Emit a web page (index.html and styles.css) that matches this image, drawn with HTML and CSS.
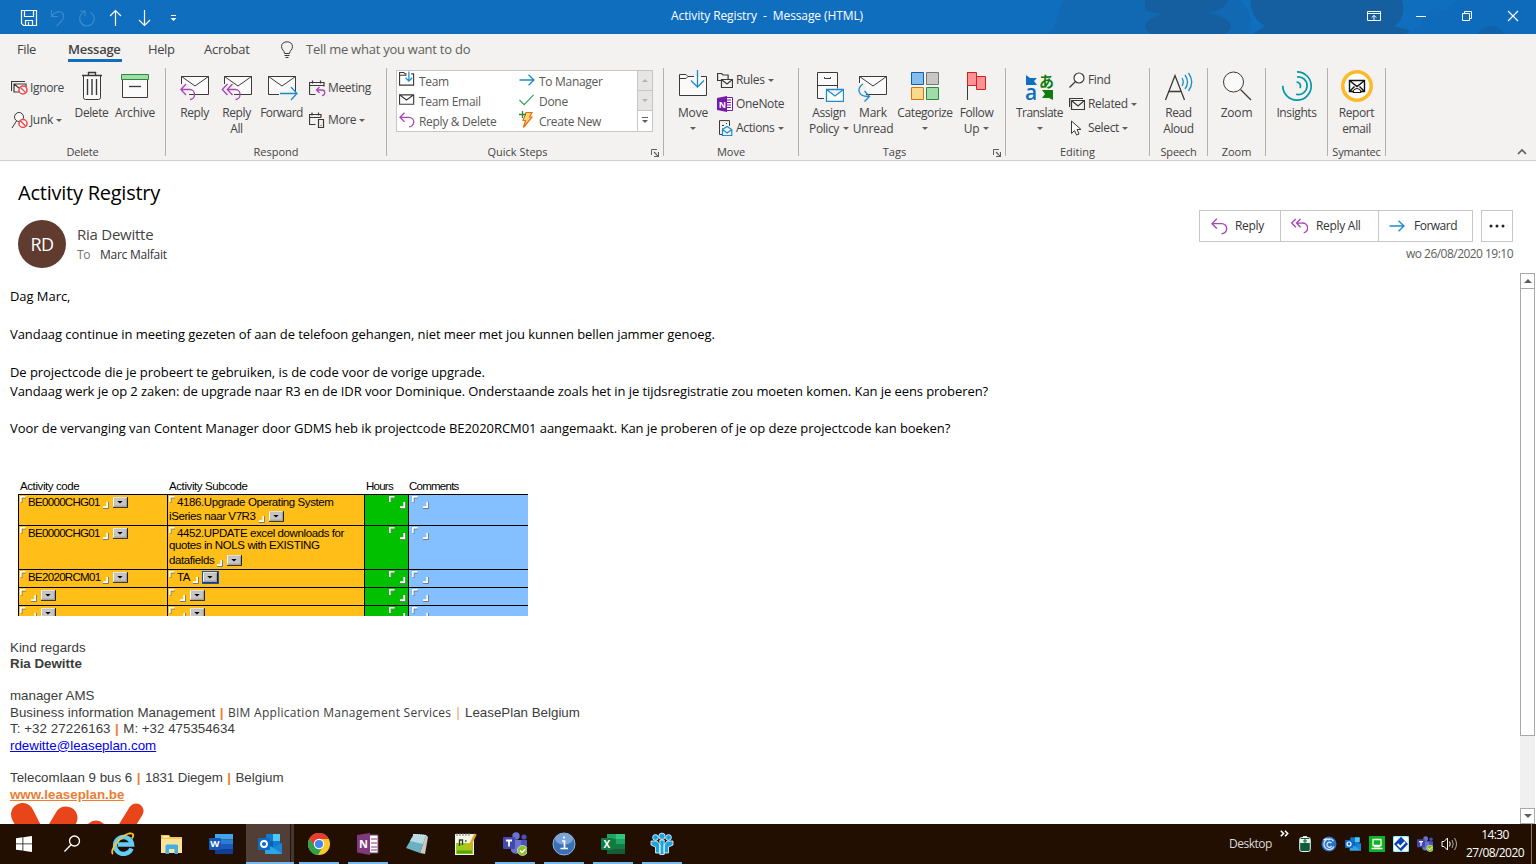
FILE: index.html
```html
<!DOCTYPE html>
<html lang="en">
<head>
<meta charset="utf-8">
<title>Activity Registry - Message (HTML)</title>
<link rel="stylesheet" href="styles.css">
</head>
<body>
<svg class="defs" width="0" height="0">
  <defs>
    <symbol id="reply" viewBox="0 0 16 16"><path d="M5.500 .8L1 5.300l4.500 4.500M1 5.300h9a4.500 4.500 0 0 1 0 9.500" fill="none" stroke="#a846b5" stroke-width="1.300"/></symbol>
    <symbol id="replyall" viewBox="0 0 16 16"><path d="M4.500 1L.7 4.800l3.800 3.800M9 1L5.200 4.800 9 8.600M5.200 4.800H10a4.700 4.700 0 0 1 2 9.200" fill="none" stroke="#a846b5" stroke-width="1.300"/></symbol>
    <symbol id="fwd" viewBox="0 0 16 16"><path d="M.5 8h14M9.500 2.700L15 8l-5.500 5.300" fill="none" stroke="#1e8bcd" stroke-width="1.300"/></symbol>
    <symbol id="no" viewBox="0 0 10 10"><circle cx="5" cy="5" r="4" fill="#fff" stroke="#ee4848" stroke-width="1.500"/><path d="M2.200 2.200l5.600 5.600" stroke="#ee4848" stroke-width="1.400"/></symbol>
    <symbol id="bigmail" viewBox="0 0 30 30"><path d="M1.500 4.500h27v18h-27z" fill="#fafafa" stroke="#3b3a39"/><path d="M1.500 4.500L15 14 28.500 4.500" fill="none" stroke="#3b3a39"/></symbol>
    <symbol id="drop" viewBox="0 0 14 10"><path d="M0 0h14v10H0z" fill="#222"/><path d="M0 0h13v9H0z" fill="#fff"/><path d="M1 1h12v8H1z" fill="#999"/><path d="M1 1h11v7H1z" fill="#c6c6c6"/><path d="M4 3.500h5L6.500 6z" fill="#000"/></symbol>
    <symbol id="open" viewBox="0 0 6 7"><path d="M2 7V2H6" fill="none" stroke="#777"/><path d="M.8 6V.8H5.500" fill="none" stroke="#fff" stroke-width="1.600"/></symbol>
    <symbol id="close" viewBox="0 0 6 7"><path d="M5.500 0v6.500H0" fill="none" stroke="#777"/><path d="M4.200 0v5.200H0" fill="none" stroke="#fff" stroke-width="1.700"/></symbol>
    <symbol id="launch" viewBox="0 0 8 8"><path d="M.5 6V.5H6" fill="none" stroke="#605e5c"/><path d="M3 3l4 4M7.500 3v4.500H3" fill="none" stroke="#605e5c" stroke-width="1.200"/></symbol>
    <symbol id="outlook" viewBox="0 0 24 24"><path d="M8 2h14v14H8z" fill="#1279d0"/><path d="M15 2h7v7h-7z" fill="#50c7f4"/><path d="M8 9h7v7H8z" fill="#0a63b2"/><path d="M7 22h17V11l-8 5-9-4z" fill="#2fa4e7"/><path d="M24 11v11L15 15.500z" fill="#1a87d6"/><rect x="0" y="6" width="12" height="12" rx="1" fill="#0f6cc4"/><circle cx="6" cy="12" r="3" fill="none" stroke="#fff" stroke-width="1.800"/></symbol>
    <symbol id="teams" viewBox="0 0 24 24"><circle cx="13" cy="4" r="3.700" fill="#6b73d6"/><circle cx="21" cy="5" r="2.600" fill="#4750b8"/><path d="M8 8h11v8a6 6 0 0 1-11 3z" fill="#6a72d4"/><path d="M18 8h6v7a4 4 0 0 1-6 4z" fill="#4a53bc"/><rect x="0" y="5" width="12" height="12" rx="1" fill="#4249ad"/><path d="M3 8.500h6M6 8.500v6" stroke="#fff" stroke-width="1.800"/><circle cx="19.500" cy="18.500" r="5" fill="#8cc028" stroke="#e8f5cf" stroke-width=".7"/><path d="M17 18.500l2 2 3.300-3.500" fill="none" stroke="#fff" stroke-width="1.500"/></symbol>
  </defs>
</svg>

<div class="window">
  <header class="titlebar">
    <svg class="cloud" width="620" height="34" viewBox="0 0 620 34"><path d="M132 34C146 22 138 14 148 0h176c18 16 8 34 8 34z" fill="#155fa0" opacity=".35"/><g fill="#155fa0"><path d="M229 0h84q-8 14-30 13-30 6-54-3z"/><ellipse cx="272" cy="26" rx="43" ry="15"/><path d="M335 0h151q5 18-8 26l16 4-4 4H337l12-8q-16-10-14-26z"/><path d="M561 34q15-16 28 0z"/></g><path d="M505 24q8-22 24-13 5-12 25-11h66v34H490z" fill="#0b66b8" opacity=".5"/></svg>
    <div class="qat">
      <svg width="18" height="18" viewBox="0 0 18 18" fill="none" stroke="#fff"><path d="M1.500 1.500h15v15h-13l-2-2zM4.500 1.500v6h9v-6M5.500 16.500v-5h7v5M8.500 13v3.500" stroke-width="1.200"/></svg>
      <svg width="18" height="18" viewBox="0 0 18 18" fill="none" stroke="#3c8ad0"><path d="M2.500 1v6.500H9M2.500 7.500C6 2 13 1 14.500 6s-4 8-7 11" stroke-width="1.200"/></svg>
      <svg width="18" height="18" viewBox="0 0 18 18" fill="none" stroke="#3c8ad0"><path d="M2 2h5v5M6.500 2.700a7.300 7.300 0 1 0 6 .5" stroke-width="1.200"/></svg>
      <svg width="18" height="18" viewBox="0 0 18 18" fill="none" stroke="#fff"><path d="M8.500 17V1.500M3 7l5.500-5.500L14 7" stroke-width="1.200"/></svg>
      <svg width="18" height="18" viewBox="0 0 18 18" fill="none" stroke="#fff"><path d="M8.500 1v15.500M3 11l5.500 5.500L14 11" stroke-width="1.200"/></svg>
      <svg width="18" height="18" viewBox="0 0 18 18"><path d="M6 6.500h5" stroke="#fff"/><path d="M5.500 9h6l-3 3z" fill="#fff"/></svg>
    </div>
    <div class="caption">Activity Registry &nbsp;-&nbsp; Message (HTML)</div>
    <div class="winbtns">
      <svg width="14" height="12" viewBox="0 0 14 12" fill="none" stroke="#fff"><path d="M.5 1.500h13v9H.5zM.5 3.500h13M7 10V5.500M4.800 7.500L7 5.300l2.200 2.200"/></svg>
      <svg width="12" height="12" viewBox="0 0 12 12" stroke="#fff"><path d="M1 6.500h10"/></svg>
      <svg width="12" height="12" viewBox="0 0 12 12" fill="none" stroke="#fff"><path d="M1.500 3.500h7v7h-7zM3.500 3V1.500h7v7H9"/></svg>
      <svg width="12" height="12" viewBox="0 0 12 12" stroke="#fff" stroke-width="1.200"><path d="M1 1l10 10M11 1L1 11"/></svg>
    </div>
  </header>

  <nav class="tabs">
    <span class="t-file">File</span><span class="t-msg">Message</span><span class="t-help">Help</span><span class="t-acro">Acrobat</span>
    <svg width="12" height="18" viewBox="0 0 12 18" fill="none" stroke="#3b3a39"><path d="M3.500 12.500c0-3-3-3.500-3-7C.5 2.500 3 .8 6 .8s5.500 1.700 5.500 4.700c0 3.500-3 4-3 7zM3.500 14.500h5M4.500 16.500h3"/></svg>
    <span class="t-tell">Tell me what you want to do</span>
  </nav>

  <section class="ribbon">
    <div class="group g-delete">
      <div class="tools">
        <div class="smalls two w-ign">
          <div class="small"><svg width="17" height="16" viewBox="0 0 17 16"><path d="M.5 11V1.500H14M3 4h12v8H3z M3 4l5 4" fill="none" stroke="#3b3a39" stroke-width="1.200"/><use href="#no" x="7" y="5" width="10" height="10"/></svg><span class="xs">Ignore</span></div>
          <div class="small"><svg width="17" height="17" viewBox="0 0 17 17"><circle cx="8" cy="5" r="4.500" fill="#fafafa" stroke="#3b3a39"/><path d="M5.500 9L1 16" stroke="#3b3a39"/><use href="#no" x="7" y="6.500" width="10" height="10"/></svg><span class="xs">Junk</span><i class="dd"></i></div>
        </div>
        <div class="big w41"><svg width="30" height="32" viewBox="0 0 30 32" fill="none" stroke="#3b3a39"><path d="M6.500 5.500h17v22q0 2-2 2h-13q-2 0-2-2z" fill="#fafafa"/><path d="M5 5.500h20M11.500 5V2.500h7V5M10.500 9v16M15 9v16M19.500 9v16" stroke-width="1.400"/></svg><span>Delete</span></div>
        <div class="big w46"><svg width="30" height="32" viewBox="0 0 30 32"><path d="M2.500 8v19.500h25V8" fill="#fafafa" stroke="#3b3a39"/><path d="M1.500 4.500h27v5h-27z" fill="#a0dba8" stroke="#2a8a40"/><path d="M9 16.500h12" stroke="#3b3a39" stroke-width="1.300"/></svg><span class="w">Archive</span></div>
      </div>
      <div class="label">Delete</div>
    </div>

    <div class="group g-respond">
      <div class="tools p8">
        <div class="big w41"><svg width="30" height="32" viewBox="0 0 30 32"><use href="#bigmail" y="2" width="30" height="30"/><path d="M0 14h9v14H0z" fill="#f3f2f1"/><path d="M6 14L.8 19.500 6 25M1 19.500h9a4.500 5 0 0 1 0 10" fill="none" stroke="#a846b5" stroke-width="1.300"/></svg><span>Reply</span></div>
        <div class="big w43"><svg width="32" height="32" viewBox="-2 0 32 32"><use href="#bigmail" y="2" width="30" height="30"/><path d="M0 14h11v12H0z" fill="#f3f2f1"/><path d="M4.500 14L-.7 19.500 4.500 25M9.500 14l-5.200 5.500L9.500 25M4.500 19.500h8a4.500 5 0 0 1 0 10" fill="none" stroke="#a846b5" stroke-width="1.300"/></svg><span>Reply<br>All</span></div>
        <div class="big w47"><svg width="32" height="32" viewBox="0 0 32 32"><use href="#bigmail" x="1" y="2" width="30" height="30"/><path d="M13 21h19v7H13z" fill="#f3f2f1"/><path d="M14 23.500h16M25 17l6 6.500-6 6.500" fill="none" stroke="#1e8bcd" stroke-width="1.300"/></svg><span class="n">Forward</span></div>
        <div class="smalls two ml4">
          <div class="small"><svg width="17" height="17" viewBox="0 0 17 17" fill="none"><path d="M.500 14.500V2.500h14.500v4M.5 5.500H15M3.500.5v3M11.500.5v3M.5 14.500h6" stroke="#3b3a39" stroke-width="1.200"/><path d="M10.500 7L7.500 10l3 3M7.500 10H13a2.500 2.500 0 0 1 0 5.500" stroke="#a846b5" stroke-width="1.300"/></svg><span class="xs">Meeting</span></div>
          <div class="small"><svg width="17" height="17" viewBox="0 0 17 17" fill="none" stroke="#3b3a39" stroke-width="1.200"><path d="M6.500 12.500h-6v-10H12v3M.5 5.500H12M3 .5v3M9.500.5v3M9.500 7.500h5v8h-5zM11.500 13.500h1"/></svg><span class="xs">More</span><i class="dd"></i></div>
        </div>
      </div>
      <div class="label wide">Respond</div>
    </div>

    <div class="group g-quick">
      <div class="tools">
        <div class="gallery">
          <div class="steps">
            <div><svg width="17" height="17" viewBox="0 0 17 17" fill="none"><path d="M8 2.500H6.500L5 1H.6v13.500H15.500v-12H13M.5 4H8" stroke="#3b3a39" stroke-width="1.200"/><path d="M10.500 0v10M7 6.700l3.500 3.500L14 6.700" stroke="#1e8bcd" stroke-width="1.300"/></svg>Team</div>
            <div><svg width="16" height="16"><use href="#fwd"/></svg>To Manager</div>
            <div><svg width="17" height="16" viewBox="0 0 17 16" fill="none" stroke="#3b3a39" stroke-width="1.200"><path d="M.6 2.500h15v10h-15zM.6 2.500L8 8l7.600-5.500"/></svg>Team Email</div>
            <div><svg width="17" height="16" viewBox="0 0 17 16"><path d="M.5 8l5 5L15.500 2.500" fill="none" stroke="#36a35a" stroke-width="1.300"/></svg>Done</div>
            <div><svg width="16" height="16"><use href="#reply"/></svg>Reply &amp; Delete</div>
            <div><svg width="16" height="18" viewBox="0 0 16 18"><path d="M7 1.500h6L10.500 6H13L4.500 16.500l2-7H4z" fill="#ffd584" stroke="#e8710a" stroke-width="1.200"/><path d="M3.500 0v7M0 3.500h7" stroke="#2a8a40" stroke-width="1.300"/></svg>Create New</div>
          </div>
          <div class="gscroll"><b><i class="up"></i></b><b><i class="dn"></i></b><b class="on"><i class="dn bar"></i></b></div>
        </div>
      </div>
      <div class="label wide launcher"><span>Quick Steps</span><svg width="8" height="8"><use href="#launch"/></svg></div>
    </div>

    <div class="group g-move">
      <div class="tools p8">
        <div class="big w42"><svg width="30" height="32" viewBox="0 0 30 32" fill="none"><path d="M1.500 4.500H8l2 2h18.500v19h-27z" fill="#fafafa"/><path d="M16 6.500h-6l-2-2H1.500v21h27v-19H23M1.500 8.500H8l2-2" stroke="#3b3a39"/><path d="M19.500 0v17M13 10.500l6.500 6.500 6.500-6.500" stroke="#1e8bcd" stroke-width="1.300"/></svg><span class="w">Move</span><i class="dd"></i></div>
        <div class="smalls ml3">
          <div class="small"><svg width="16" height="17" viewBox="0 0 16 17" fill="none" stroke="#3b3a39" stroke-width="1.200"><path d="M4.500 8.500H.6v-7h4l1.500 1.500h5v4M4.500 7.500h11v8h-11zM4.500 7.500L10 12l5.500-4.500"/></svg><span class="xs">Rules</span><i class="dd"></i></div>
          <div class="small"><svg width="16" height="16" viewBox="0 0 16 16"><path d="M9 1.500h6.500v13H9z" fill="#fff" stroke="#7719aa"/><path d="M10 4h4M10 6.500h4M10 9h4M10 11.500h4" stroke="#7719aa"/><path d="M0 2l10-2v16L0 14z" fill="#7719aa"/><text x="1.800" y="11.500" class="ic" font-size="9">N</text></svg><span class="xs">OneNote</span></div>
          <div class="small"><svg width="16" height="17" viewBox="0 0 16 17" fill="none"><path d="M6 14.500H2.500V.6h10V6M5 5.500h2M9 3.500h1M5 9h1" stroke="#3b3a39"/><path d="M5.500 9.500L10 6.500l4.800 3v6H5.500zM5.500 9.500L10 13l4.800-3.500" stroke="#1e8bcd" stroke-width="1.200"/></svg><span class="xs">Actions</span><i class="dd"></i></div>
        </div>
      </div>
      <div class="label wide">Move</div>
    </div>

    <div class="group g-tags">
      <div class="tools p8">
        <div class="big w44"><svg width="30" height="32" viewBox="0 0 30 32" fill="none"><path d="M10 28.500H3.500v-26h20v16M3.500 15.500h20" fill="#fafafa" stroke="#3b3a39"/><path d="M10.500 7v1.500h6V7" stroke="#3b3a39"/><path d="M12.500 19.500h17v12h-17zM12.500 19.500L21 26l8.500-6.500" fill="#fff" stroke="#1e8bcd" stroke-width="1.300"/></svg><span>Assign<br>Policy<i class="dd"></i></span></div>
        <div class="big w44"><svg width="30" height="32" viewBox="0 0 30 32" fill="none"><use href="#bigmail" y="2" width="30" height="30"/><path d="M0 13h8v12h7v4H0z" fill="#f3f2f1"/><path d="M5 14C-1 18-1 27 11 26.500M6.500 21l5 5.500-5 5" stroke="#1e8bcd" stroke-width="1.300"/></svg><span class="w">Mark<br>Unread</span></div>
        <div class="big w60"><svg width="30" height="32" viewBox="0 0 30 32"><path d="M1.500 2.500h12v12h-12z" fill="#83beec" stroke="#0f5fae"/><path d="M16.500 2.500h12v12h-12z" fill="#c8c6c4" stroke="#777"/><path d="M1.500 17.500h12v12h-12z" fill="#fada8c" stroke="#d9730b"/><path d="M16.500 17.500h12v12h-12z" fill="#a0dba8" stroke="#2a8a40"/></svg><span>Categorize</span><i class="dd"></i></div>
        <div class="big w43"><svg width="30" height="32" viewBox="0 0 30 32"><path d="M5.500 2v28" stroke="#3b3a39"/><path d="M5.500 2.500h9v4h9v13h-9v-4h-9z" fill="#ff9198" stroke="#d42314"/><path d="M14.500 6v10" stroke="#d42314"/></svg><span>Follow<br>Up<i class="dd"></i></span></div>
      </div>
      <div class="label wide launcher"><span>Tags</span><svg width="8" height="8"><use href="#launch"/></svg></div>
    </div>

    <div class="group g-edit">
      <div class="tools p8">
        <div class="big w51"><svg class="vis" width="30" height="32" viewBox="0 0 30 32"><text x="14" y="16.500" class="jp" font-size="15">あ</text><text x="0" y="29.500" class="la" font-size="21">a</text><path d="M1 5l4 3h7l-3 3 3 4H1z" fill="#106ebe"/><path d="M28 30v-10H17l3 4-3 4h7z" fill="#107c10"/></svg><span class="n">Translate</span><i class="dd"></i></div>
        <div class="smalls ml4">
          <div class="small"><svg width="16" height="17" viewBox="0 0 16 17"><circle cx="10" cy="6" r="5" fill="#fafafa" stroke="#3b3a39" stroke-width="1.200"/><path d="M6.500 9.500L.5 15.500" stroke="#3b3a39" stroke-width="1.300"/></svg><span class="xs">Find</span></div>
          <div class="small"><svg width="16" height="16" viewBox="0 0 16 16" fill="none" stroke="#3b3a39" stroke-width="1.200"><path d="M.6 11V2.500H14M2.500 4.500h13v9h-13zM2.500 4.500L9 10l6.500-5.500"/></svg><span class="xs">Related</span><i class="dd"></i></div>
          <div class="small"><svg width="16" height="16" viewBox="0 0 16 16"><path d="M2.500 1v12.500l3-3 2 4.500 2.500-1-2-4.500h4z" fill="#fff" stroke="#3b3a39"/></svg><span class="xs">Select</span><i class="dd"></i></div>
        </div>
      </div>
      <div class="label wide">Editing</div>
    </div>

    <div class="group g58">
      <div class="tools"><div class="big full"><svg width="30" height="32" viewBox="0 0 30 32" fill="none"><path d="M1.500 30L11 5.500 20.500 30M5 21.500h12" stroke="#3b3a39" stroke-width="1.300"/><path d="M18 8q2.500 4 0 8M21 5q5 7 0 14M24.500 3q6.500 9 0 18" stroke="#1e8bcd" stroke-width="1.300"/></svg><span>Read<br>Aloud</span></div></div>
      <div class="label">Speech</div>
    </div>
    <div class="group g58">
      <div class="tools"><div class="big full"><svg width="30" height="32" viewBox="0 0 30 32"><circle cx="11.500" cy="12" r="10" fill="#fafafa" stroke="#3b3a39"/><path d="M18.500 19.500L29 30" stroke="#3b3a39" stroke-width="1.300"/></svg><span class="w">Zoom</span></div></div>
      <div class="label wide">Zoom</div>
    </div>
    <div class="group g62">
      <div class="tools"><div class="big full"><svg width="32" height="32" viewBox="0 0 32 32" fill="none" stroke="#0097a7" stroke-width="1.700"><path d="M16 1.800a14.200 14.200 0 1 1-14.200 14M16 7a8.800 8.800 0 1 1-1 17.200M15.500 12a4 4 0 0 1 3.500 6"/></svg><span>Insights</span></div></div>
      <div class="label"></div>
    </div>
    <div class="group g58">
      <div class="tools"><div class="big full"><svg width="32" height="32" viewBox="0 0 32 32" fill="none"><circle cx="16" cy="16" r="14.200" fill="#fff" stroke="#fdb927" stroke-width="3.600"/><path d="M8.500 10.500h15v11h-15zM8.500 10.500l7.500 6 7.500-6M8.500 21.500l5-5M23.500 21.500l-5-5" stroke="#111" stroke-width="1.400"/><path d="M12 22.500q0-4 4-4t4 4z" fill="#fff" stroke="#111"/></svg><span>Report<br>email</span></div></div>
      <div class="label">Symantec</div>
    </div>
    <svg class="collapse" width="10" height="7" viewBox="0 0 10 7"><path d="M1 6l4-4 4 4" fill="none" stroke="#605e5c" stroke-width="1.700"/></svg>
  </section>

  <section class="msghead">
    <h1>Activity Registry</h1>
    <div class="who">
      <div class="avatar">RD</div>
      <div class="names">
        <div class="from">Ria Dewitte</div>
        <div class="to"><span class="grey">To</span><span>Marc Malfait</span></div>
      </div>
      <div class="actions">
        <div class="btns">
          <div class="split">
            <button class="b1"><svg width="17" height="17"><use href="#reply"/></svg>Reply</button>
            <button class="b2"><svg width="17" height="17"><use href="#replyall"/></svg>Reply All</button>
            <button class="b3"><svg width="16" height="16"><use href="#fwd"/></svg>Forward</button>
          </div>
          <button class="more"><svg width="16" height="4" viewBox="0 0 16 4" fill="#222"><circle cx="2" cy="2" r="1.500"/><circle cx="8" cy="2" r="1.500"/><circle cx="14" cy="2" r="1.500"/></svg></button>
        </div>
        <div class="date">wo 26/08/2020 19:10</div>
      </div>
    </div>
  </section>

  <main class="reading">
    <article class="mail">
      <p>Dag Marc,</p>
      <p>Vandaag continue in meeting gezeten of aan de telefoon gehangen, niet meer met jou kunnen bellen jammer genoeg.</p>
      <p>De projectcode die je probeert te gebruiken, is de code voor de vorige upgrade.<br><span class="l4">Vandaag werk je op 2 zaken: de upgrade naar R3 en de IDR voor Dominique. Onderstaande zoals het in je tijdsregistratie zou moeten komen. Kan je eens proberen?</span></p>
      <p>Voor de vervanging van Content Manager door GDMS heb ik projectcode BE2020RCM01 aangemaakt. Kan je proberen of je op deze projectcode kan boeken?</p>

      <div class="sheet">
        <div class="row head"><span>Activity code</span><span>Activity Subcode</span><span class="tight">Hours</span><span class="tight">Comments</span></div>
        <div class="row r31">
          <div class="o"><div class="ln"><svg class="op"><use href="#open"/></svg><span class="code">BE0000CHG01</span><svg class="cl"><use href="#close"/></svg><svg class="dp"><use href="#drop"/></svg></div></div>
          <div class="o"><div class="ln"><svg class="op"><use href="#open"/></svg>4186.Upgrade Operating System</div><div class="ln">iSeries naar V7R3<svg class="cl"><use href="#close"/></svg><svg class="dp"><use href="#drop"/></svg></div></div>
          <div class="g"><svg class="op"><use href="#open"/></svg><svg class="cl"><use href="#close"/></svg></div>
          <div class="b"><svg class="op"><use href="#open"/></svg><svg class="cl"><use href="#close"/></svg></div>
        </div>
        <div class="row r44">
          <div class="o"><div class="ln"><svg class="op"><use href="#open"/></svg><span class="code">BE0000CHG01</span><svg class="cl"><use href="#close"/></svg><svg class="dp"><use href="#drop"/></svg></div></div>
          <div class="o"><div class="ln l12"><svg class="op"><use href="#open"/></svg>4452.UPDATE excel downloads for</div><div class="ln l12">quotes in NOLS with EXISTING</div><div class="ln l16">datafields<svg class="cl"><use href="#close"/></svg><svg class="dp"><use href="#drop"/></svg></div></div>
          <div class="g"><svg class="op"><use href="#open"/></svg><svg class="cl"><use href="#close"/></svg></div>
          <div class="b"><svg class="op"><use href="#open"/></svg><svg class="cl"><use href="#close"/></svg></div>
        </div>
        <div class="row r18">
          <div class="o"><div class="ln"><svg class="op"><use href="#open"/></svg><span class="code">BE2020RCM01</span><svg class="cl"><use href="#close"/></svg><svg class="dp"><use href="#drop"/></svg></div></div>
          <div class="o"><div class="ln"><svg class="op"><use href="#open"/></svg>TA<svg class="cl"><use href="#close"/></svg><svg class="dp focus"><use href="#drop"/></svg></div></div>
          <div class="g"><svg class="op"><use href="#open"/></svg><svg class="cl"><use href="#close"/></svg></div>
          <div class="b"><svg class="op"><use href="#open"/></svg><svg class="cl"><use href="#close"/></svg></div>
        </div>
        <div class="row r18">
          <div class="o"><div class="ln"><svg class="op"><use href="#open"/></svg><svg class="cl"><use href="#close"/></svg><svg class="dp"><use href="#drop"/></svg></div></div>
          <div class="o"><div class="ln"><svg class="op"><use href="#open"/></svg><svg class="cl"><use href="#close"/></svg><svg class="dp"><use href="#drop"/></svg></div></div>
          <div class="g"><svg class="op"><use href="#open"/></svg><svg class="cl"><use href="#close"/></svg></div>
          <div class="b"><svg class="op"><use href="#open"/></svg><svg class="cl"><use href="#close"/></svg></div>
        </div>
        <div class="row r11">
          <div class="o"><div class="ln"><svg class="op"><use href="#open"/></svg><svg class="cl"><use href="#close"/></svg><svg class="dp"><use href="#drop"/></svg></div></div>
          <div class="o"><div class="ln"><svg class="op"><use href="#open"/></svg><svg class="cl"><use href="#close"/></svg><svg class="dp"><use href="#drop"/></svg></div></div>
          <div class="g"><svg class="op"><use href="#open"/></svg><svg class="cl"><use href="#close"/></svg></div>
          <div class="b"><svg class="op"><use href="#open"/></svg><svg class="cl"><use href="#close"/></svg></div>
        </div>
      </div>

      <div class="sig">
        <div>Kind regards</div>
        <div><b>Ria Dewitte</b></div>
        <div class="gap">manager AMS</div>
        <div class="l17">Business information Management <i>|</i> <span class="bim">BIM Application Management Services <i>|</i></span> LeasePlan Belgium</div>
        <div><span class="tel">T: +32 27226163</span> <i>|</i> M: +32 475354634</div>
        <div><a class="m">rdewitte@leaseplan.com</a></div>
        <div class="gap">Telecomlaan 9 bus 6 <i>|</i> <span class="zip">1831 Diegem</span> <i>|</i> Belgium</div>
        <div class="l17"><a class="w">www.leaseplan.be</a></div>
        <svg class="logo" width="140" height="24" viewBox="0 0 140 24" fill="none" stroke="#e8451a" stroke-linecap="round"><path d="M12.500 11.500L26 38M56 15L40 42" stroke-width="23"/><path d="M86 28v10" stroke-width="21"/><path d="M126 8L110 34" stroke-width="15"/></svg>
      </div>
    </article>
    <aside class="scroll"><b><i class="up"></i></b><div class="track"><div class="thumb"></div></div><b><i class="dn"></i></b></aside>
  </main>

  <footer class="taskbar">
    <div class="apps">
      <span class="start"><svg width="16" height="16" viewBox="0 0 16 16" fill="#fff"><path d="M0 2.200l6.500-.9v6.200H0zM7.300 1.200L16 0v7.500H7.300zM0 8.300h6.500v6.300L0 13.700zM7.300 8.300H16V16l-8.700-1.200z"/></svg></span>
      <span class="start"><svg width="18" height="18" viewBox="0 0 18 18" fill="none" stroke="#fff" stroke-width="1.300"><circle cx="11.500" cy="6" r="5"/><path d="M8 9.700L1.500 16.500"/></svg></span>
      <span class="app"><svg width="24" height="24" viewBox="0 0 24 24" fill="none"><path d="M20.500 16.500A8.500 8.500 0 1 1 21 12.500H7" stroke="#62cdf7" stroke-width="4.400"/><path d="M2 22C-2 19 9 4 18 1.500c5-1 5 2 3 5" stroke="#f9c623" stroke-width="1.800"/></svg></span>
      <span class="app"><svg width="24" height="24" viewBox="0 0 24 24"><path d="M1 3h8l1.500 2H22v16H1z" fill="#f5c75a"/><path d="M3 4h6v1.500H3z" fill="#fff3c4"/><path d="M1 7h21v14H1z" fill="#fde398"/><path d="M5.500 22v-8q0-1.500 1.500-1.500h9.500q1.500 0 1.500 1.500v8h-3.500v-5h-5.500v5z" fill="#41b0e8"/></svg></span>
      <span class="app"><svg width="24" height="24" viewBox="0 0 24 24"><path d="M6 2h18v5.500H6z" fill="#41a5ee"/><path d="M6 7.500h18V12H6z" fill="#2b7cd3"/><path d="M6 12h18v5H6z" fill="#185abd"/><path d="M6 17h18v5H6z" fill="#103f91"/><rect y="6" width="12" height="12" rx="1" fill="#1757b5"/><text x="1.300" y="15.300" class="ic" font-size="9.500">W</text></svg></span>
      <span class="app run active"><svg width="24" height="24"><use href="#outlook"/></svg></span>
      <span class="app run"><svg width="24" height="24" viewBox="0 0 24 24"><circle cx="12" cy="12" r="11" fill="#f8c927"/><path d="M12 12L2.500 6.500A11 11 0 0 1 21.500 6.500L12 7z" fill="#e33e2f"/><path d="M2.500 6.500A11 11 0 0 0 11 23l5-9-8 .5z" fill="#2da14b"/><path d="M2.500 6.500L8 15l4-8h9.500A11 11 0 0 0 2.500 6.500" fill="#e33e2f"/><circle cx="12" cy="12" r="5.200" fill="#fff"/><circle cx="12" cy="12" r="4.100" fill="#4285f4"/></svg></span>
      <span class="app run"><svg width="24" height="24" viewBox="0 0 24 24"><path d="M13 3h9v18h-9z" fill="#fff" stroke="#80397b"/><path d="M15 7h6M15 11h6M15 15h6M15 18h6" stroke="#80397b"/><path d="M1 3l13-2v22L1 20.500z" fill="#80397b"/><text x="3" y="16" class="ic" font-size="11">N</text></svg></span>
      <span class="app"><svg width="24" height="24" viewBox="0 0 24 24"><path d="M9 2l12 1-6 18L1 16z" fill="#6db0c4"/><path d="M9 2l12 1-3 9L5 9z" fill="#b5dbe5"/><path d="M21 3l-6 18 5 1 3-17z" fill="#c9c9c0"/><path d="M8 2.500l14 1" stroke="#eee" stroke-dasharray="1 1"/></svg></span>
      <span class="app"><svg width="24" height="24" viewBox="0 0 24 24"><path d="M1 2h19v21H1z" fill="#f3f7e6"/><path d="M2 11h17v11H2z" fill="#9ccd18"/><path d="M3 20h15" stroke="#5c9f0f" stroke-width="3"/><path d="M3 1v3M6 1v3M9 1v3M12 1v3M15 1v3" stroke="#777"/><path d="M5.500 14V8h3v5M11 9h1.500" stroke="#333" stroke-width="1.300" fill="none"/><path d="M21.500 2L14 17.500" stroke="#e4a52c" stroke-width="2.600"/></svg></span>
      <span class="app run"><svg width="24" height="24"><use href="#teams"/></svg></span>
      <span class="app run"><svg width="24" height="24" viewBox="0 0 24 24"><circle cx="12" cy="12" r="11" fill="#3c70b5" stroke="#8eb2df"/><ellipse cx="12" cy="7" rx="9" ry="5.500" fill="#7ba5da"/><path d="M12 4.500v2M10 9h2.500v7M8.500 16.500h7.500" stroke="#fff" stroke-width="1.700" fill="none"/></svg></span>
      <span class="app run"><svg width="24" height="24" viewBox="0 0 24 24"><path d="M6 2h9v5H6z" fill="#21a366"/><path d="M15 2h9v5h-9z" fill="#33c481"/><path d="M6 7h18v10H6z" fill="#107c41"/><path d="M15 7h9v5h-9z" fill="#21a366"/><path d="M6 17h18v5H6z" fill="#185c37"/><rect y="6" width="12" height="12" rx="1" fill="#107c41"/><text x="2.500" y="15.500" class="ic" font-size="10">X</text></svg></span>
      <span class="app run"><svg width="24" height="24" viewBox="0 0 24 24" fill="#1aa5e0" stroke="#fff" stroke-width=".8"><path d="M1 9h6l3 4v8H5.500v-6L1 13zM23 9h-6l-3 4v8h4.500v-6l4.500-2zM9.800 8h4.400v14.500H9.800z"/><circle cx="12" cy="4.300" r="3.200"/><circle cx="5.500" cy="5.500" r="2.900"/><circle cx="18.500" cy="5.500" r="2.900"/></svg></span>
    </div>
    <div class="tray">
      <span class="desk">Desktop</span><svg class="chev" width="9" height="7" viewBox="0 0 9 7" fill="none" stroke="#fff" stroke-width="1.600"><path d="M.8.800l2.700 2.700L.8 6.200M5 .8l2.700 2.700L5 6.200"/></svg>
      <div class="icons">
        <svg width="16" height="16" viewBox="0 0 16 16"><path d="M6 0h4v2H6z" fill="#cfe8dc"/><rect x="2.700" y="1.500" width="10.600" height="14" rx="2" fill="#0d5c3b" stroke="#e8f3ee"/><path d="M3 3h10v4H3z" fill="#e8f3ee"/><path d="M8 3v4M6 5h4" stroke="#0d5c3b"/></svg>
        <svg width="16" height="16" viewBox="0 0 16 16" fill="none"><circle cx="8" cy="8" r="7.500" fill="#2a72c4"/><path d="M2.500 4q3-2 6 0M12.500 5a5.300 5.300 0 1 0 .5 5.500M10.500 7a2.600 2.600 0 1 0 .3 3" stroke="#d7e8fa" stroke-width="1.300"/></svg>
        <svg width="16" height="16"><use href="#outlook"/></svg>
        <svg width="16" height="16" viewBox="0 0 16 16" fill="none"><path d="M0 0h16v16H0z" fill="#0bb41c"/><path d="M4 3.500h8v6H4zM2.500 12.500h11M5 10.500h6" stroke="#fff" stroke-width="1.300"/></svg>
        <svg width="16" height="16" viewBox="0 0 16 16"><rect width="16" height="16" rx="2" fill="#fff" stroke="#25e6ef"/><path d="M8 .8L15 8l-7 7.200L1 8z" fill="#0844b8"/><path d="M4.500 8l2.800 2.800L12 6" fill="none" stroke="#fff" stroke-width="1.900"/></svg>
        <svg width="16" height="16"><use href="#teams"/></svg>
        <svg width="18" height="16" viewBox="0 0 18 16" fill="none"><path d="M1 5.500h2L6.500 2v12L3 10.500H1z" stroke="#fff"/><path d="M8.500 5.500q1.500 2.500 0 5" stroke="#fff"/><path d="M11 4q2.500 4 0 8M13.500 2q4 6 0 12" stroke="#aaa"/></svg>
      </div>
      <div class="clock"><span>14:30</span><span>27/08/2020</span></div>
      <div class="peek"></div>
    </div>
  </footer>
</div>
</body>
</html>
```
FILE: styles.css
```css
* { box-sizing: border-box; }
body { margin: 0; font: 12px/16px "Open Sans", "Noto Sans", sans-serif; color: #444; }
svg { display: block; flex: none; }
.defs { position: absolute; }
.vis { overflow: visible; }
.window { width: 1536px; height: 864px; display: flex; flex-direction: column; overflow: hidden; background: #fff; }

/* title bar */
.titlebar { height: 34px; background: #106ebe; display: grid; grid-template-columns: 671px 1fr 181px; align-items: center; position: relative; color: #fff; }
.cloud { position: absolute; right: 0; top: 0; }
.qat { display: flex; gap: 11px; padding-left: 20px; padding-top: 1px; position: relative; }
.caption { letter-spacing: -.1px; margin-bottom: 2px; position: relative; }
.winbtns { display: flex; position: relative; padding-left: 12px; margin-top: -2px; }
.winbtns svg { margin-right: 34px; }

/* tabs */
.tabs { height: 34px; background: #f3f2f1; display: flex; font-size: 13px; line-height: 18px; padding: 6px 0 0 17px; letter-spacing: -.25px; }
.t-file { width: 51px; letter-spacing: -.4px; }
.t-msg { font-weight: 600; border-bottom: 3px solid #106ebe; height: 22px; width: 54px; }
.t-help { margin-left: 26px; width: 56px; letter-spacing: -.4px; }
.t-acro { width: 77px; }
.t-tell { margin-left: 13px; color: #605e5c; }
.tabs svg { margin-top: 1px; }

/* ribbon */
.ribbon { height: 93px; background: #f3f2f1; border-bottom: 1px solid #d2d0ce; display: flex; }
.group { height: 88px; border-right: 1px solid #b3b0ad; display: grid; grid-template-rows: 80px 8px; }
.g-delete { width: 166px; }
.g-respond { width: 221px; }
.g-quick { width: 277px; }
.g-move { width: 135px; }
.g-tags { width: 207px; }
.g-edit { width: 144px; }
.g58 { width: 58px; }
.g62 { width: 62px; }
.tools { display: flex; }
.p8 { padding-left: 8px; }
.ml3 { margin-left: 3px; }
.ml4 { margin-left: 4px; }
.label { font-size: 11px; line-height: 8px; text-align: center; letter-spacing: -.2px; white-space: nowrap; }
.label.wide { letter-spacing: 0; }
.launcher { display: flex; }
.launcher span { flex: 1; text-align: center; padding-left: 0; }
.launcher svg { margin: 1px 4px 0 3px; }
.big { display: flex; flex-direction: column; align-items: center; padding-top: 2px; text-align: center; letter-spacing: -.4px; white-space: nowrap; }
.big span { margin-top: 3px; }
.big .n { letter-spacing: -.57px; }
.big .w { letter-spacing: -.2px; }
.big > .dd { margin: 6px 0 0; }
.w41 { width: 41px; } .w42 { width: 42px; } .w43 { width: 43px; } .w44 { width: 44px; }
.w46 { width: 46px; } .w47 { width: 47px; } .w51 { width: 51px; } .w60 { width: 60px; }
.full { width: 100%; }
.dd { display: inline-block; border: 3px solid transparent; border-top-color: #605e5c; border-bottom: 0; margin: 0 0 3px 4px; }
.smalls { display: flex; flex-direction: column; }
.smalls.two { padding-top: 4px; }
.small { height: 24px; display: flex; align-items: center; letter-spacing: -.35px; }
.small span { margin-left: 3px; }
.two .small span { margin-left: 2px; }
.small .dd { margin: 0 0 0 3px; }
.two .small { height: 32px; }
.w-ign { width: 60px; padding-left: 11px; margin-right: 11px; }
.gallery { margin: 2px 0 0 9px; width: 257px; height: 62px; background: #fff; border: 1px solid #c8c6c4; display: flex; }
.steps { flex: 1; display: grid; grid-template-columns: 120px 1fr; grid-auto-rows: 20px; padding-left: 2px; letter-spacing: -.3px; color: #5a5856; }
.steps div { display: flex; align-items: center; white-space: nowrap; padding-top: 2px; }
.steps svg { width: 16px; margin: -5px 4px 0 0; overflow: visible; }
.gscroll { width: 15px; display: grid; grid-template-rows: repeat(3, 20px); border-left: 1px solid #c8c6c4; }
.gscroll b { background: #e6e5e4; border-bottom: 1px solid #c8c6c4; display: grid; place-items: center; }
.gscroll b.on { background: #fff; border: 0; }
.up { border: 3px solid transparent; border-bottom-color: #b5b3b1; border-top: 0; }
.dn { border: 3px solid transparent; border-top-color: #b5b3b1; border-bottom: 0; }
.dn.bar { border-top-color: #605e5c; position: relative; }
.bar::before { content: ""; position: absolute; left: -3px; top: -6px; width: 6px; height: 1px; background: #605e5c; }
.collapse { margin: 80px 0 0 131px; }
.ic { font-family: "Open Sans", sans-serif; font-weight: 700; fill: #fff; }
.jp { font-family: "Noto Sans CJK JP", sans-serif; font-weight: 700; fill: #107c10; }
.la { font-family: "Open Sans", sans-serif; font-weight: 600; fill: #106ebe; }

/* message header */
.msghead { height: 112px; padding: 20px 23px 0 18px; }
h1 { margin: 0; font-size: 20px; line-height: 24px; font-weight: 400; letter-spacing: -.24px; color: #000; }
.who { display: flex; }
.avatar { width: 48px; height: 48px; border-radius: 50%; background: #603b30; color: #fff; font-size: 18px; line-height: 48px; text-align: center; margin-top: 15px; letter-spacing: -.5px; }
.names { margin: 19px 0 0 11px; }
.from { font-size: 15px; line-height: 20px; letter-spacing: -.25px; }
.to { display: flex; line-height: 19px; letter-spacing: -.25px; color: #333; padding-top: 1px; }
.to .grey { width: 23px; color: #767472; }
.actions { margin: 5px 0 0 auto; display: flex; flex-direction: column; align-items: flex-end; }
.btns { display: flex; gap: 8px; }
.split { display: flex; border: 1px solid #c8c6c4; width: 274px; }
button { font: inherit; color: #333; background: #fff; border: 0; height: 30px; display: flex; align-items: center; padding: 0 0 0 11px; letter-spacing: -.3px; }
.split button + button { border-left: 1px solid #c8c6c4; padding-left: 10px; }
.b1 { width: 80px; gap: 7px; } .b2 { width: 98px; gap: 8px; } .b3 { width: 94px; gap: 9px; }
.split .b3 { letter-spacing: -.5px; }
.more { width: 32px; height: 32px; border: 1px solid #c8c6c4; padding: 0; justify-content: center; }
.date { margin-top: 4px; letter-spacing: -.53px; color: #605e5c; }

/* reading pane */
.reading { height: 551px; display: flex; }
.mail { flex: 1; padding: 14px 0 0 10px; overflow: hidden; }
.mail p { margin: 0 0 18.900px; font-size: 13px; line-height: 18.900px; letter-spacing: -.06px; color: #000; white-space: nowrap; }
.mail .l4 { letter-spacing: -.077px; }
.scroll { width: 16px; padding-right: 1px; display: flex; flex-direction: column; }
.scroll b { height: 16px; border: 1px solid #a8a8a8; display: grid; place-items: center; }
.scroll .up, .scroll .dn { border-width: 4px; }
.scroll .up { border-bottom-color: #606060; border-top: 0; }
.scroll .dn { border-top-color: #606060; border-bottom: 0; }
.track { flex: 1; background: #f0f0f0; }
.thumb { height: 448px; margin-top: -1px; background: #fff; border: 1px solid #a8a8a8; }

/* embedded timesheet */
.sheet { width: 510px; height: 136px; margin: 42px 0 0 8px; overflow: hidden; font: 11.500px/13px "Liberation Sans", Arial, sans-serif; letter-spacing: -.4px; color: #000; }
.row { display: grid; grid-template-columns: 149px 197px 44px 120px; }
.head { height: 14px; }
.head span { padding-left: 2px; }
.head .tight { letter-spacing: -.75px; padding-left: 2px; }
.head .tight + .tight { padding-left: 1px; }
.row > div { border-top: 1px solid #000; border-left: 1px solid #000; overflow: hidden; white-space: nowrap; }
.r31 { height: 31px; } .r44 { height: 44px; } .r18 { height: 18px; } .r11 { height: 11px; }
.o { background: #ffbe18; padding: 1px 0 0 1px; }
.g { background: #00c000; padding: 1px 2px 0 0; display: flex; justify-content: flex-end; }
.b { background: #84c0ff; padding: 1px 0 0 3px; display: flex; }
.ln { display: flex; height: 14px; align-items: flex-start; }
.l12 { height: 12px; }
.l16 { height: 16px; padding-top: 3px; }
.code { letter-spacing: -.68px; }
.op { width: 6px; height: 7px; margin-right: 2px; }
.cl { width: 6px; height: 7px; margin: 6px 4px 0 3px; }
.dp { width: 15px; height: 11px; margin-top: 1px; }
.focus { outline: 1px solid #0a50e0; outline-offset: 0; }
.g .cl { margin: 6px 0 0 3px; }

/* signature */
.sig { margin-top: 24px; font: 13.330px/16.100px "Liberation Sans", Arial, sans-serif; color: #3c3c3c; white-space: nowrap; }
.sig i { font-style: normal; font-weight: 700; color: #ed7d31; padding: 0 .8px; }
.gap { margin-top: 16px; }
.l17 { line-height: 17px; }
.bim { font: 12px/16px "Open Sans", sans-serif; letter-spacing: .28px; }
.sig .bim i { padding: 0; font-weight: 400; letter-spacing: 0; }
.tel { letter-spacing: .06px; }
.zip { letter-spacing: -.14px; }
.m { color: #0000ee; text-decoration: underline; }
.sig .w { color: #ed7d31; font-weight: 700; text-decoration: underline; }

/* taskbar */
.taskbar { height: 40px; background: #220f02; display: flex; justify-content: space-between; color: #fff; }
.apps { display: flex; }
.start { width: 48px; display: grid; place-items: center; }
.app { width: 49px; display: grid; place-items: center; padding-left: 4px; }
.run { background: linear-gradient(#76b9ed, #76b9ed) 7px 38px / 40px 2px no-repeat; }
.active { background: linear-gradient(#76b9ed, #76b9ed) 0 38px / 48px 2px no-repeat, linear-gradient(90deg, transparent 44px, #20120a 44px, #20120a 45px, #463630 45px), #503e37; width: 48px; margin: 0 0 0 3px; padding: 0; }
.active + .run { margin-left: -2px; }
.tray { display: flex; align-items: flex-start; }
.desk { margin: 12px 0 0; width: 51px; letter-spacing: -.5px; color: #dcd8d5; }
.chev { margin-top: 6px; }
.icons { display: flex; gap: 8px; margin: 12px 0 0 8px; }
.clock { width: 72px; margin-top: 2px; display: flex; flex-direction: column; align-items: center; line-height: 18px; letter-spacing: -.57px; }
.peek { width: 5px; height: 40px; border-left: 1px solid #85796f; }
```
